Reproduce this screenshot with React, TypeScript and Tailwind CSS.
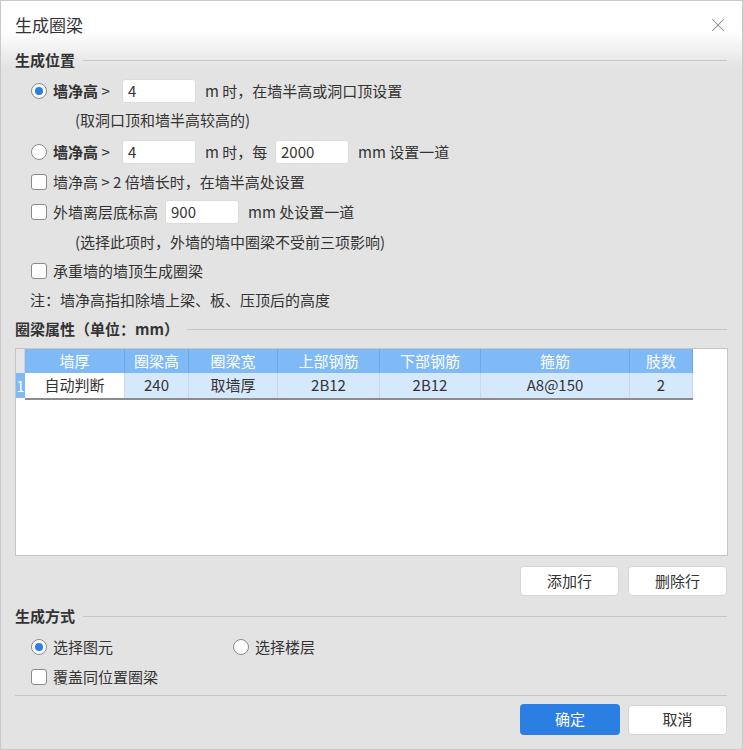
import { X } from "lucide-react";

const font = { fontFamily: '"Noto Sans CJK SC", "Microsoft YaHei", sans-serif' };

function Radio({ checked }: { checked?: boolean }) {
    return (
        <span className="w-4 h-4 rounded-full border border-[#8a8a8a] bg-white flex items-center justify-center shrink-0">
            {checked && <span className="w-2 h-2 rounded-full bg-[#2b7fe2]" />}
        </span>
    );
}

function Check() {
    return <span className="w-4 h-4 rounded-[3px] border border-[#8a8a8a] bg-white shrink-0" />;
}

function Field({ value, w = "w-[74px]" }: { value: string; w?: string }) {
    return (
        <span className={`${w} h-6 bg-white border border-[#dcdcdc] rounded-[3px] px-[5px] flex items-center text-[#333] text-[15px]`}>
            {value}
        </span>
    );
}

function Heading({ title }: { title: string }) {
    return (
        <div className="h-5 flex items-center gap-2 pr-[1px]">
            <span className="font-bold text-[15px] text-[#333]">{title}</span>
            <span className="flex-1 h-px bg-[#c6c6c6]" />
        </div>
    );
}

function Btn({ label, primary }: { label: string; primary?: boolean }) {
    return (
        <button
            className={
                primary
                    ? "w-[100px] h-[31px] rounded-[4px] bg-[#2b7fe2] text-white text-[15px]"
                    : "w-[99px] h-[30px] rounded-[4px] bg-white border border-[#d6d6d6] text-[#333] text-[15px]"
            }
        >
            {label}
        </button>
    );
}

const cols = [
    { h: "墙厚", v: "自动判断", w: "w-[100px]", white: true },
    { h: "圈梁高", v: "240", w: "w-[64px]" },
    { h: "圈梁宽", v: "取墙厚", w: "w-[89px]" },
    { h: "上部钢筋", v: "2B12", w: "w-[102px]" },
    { h: "下部钢筋", v: "2B12", w: "w-[101px]" },
    { h: "箍筋", v: "A8@150", w: "w-[149px]" },
    { h: "肢数", v: "2", w: "w-[63px]" },
];

export default function App() {
    return (
        <div
            style={font}
            className="w-[743px] h-[750px] border border-[#c9c9c9] bg-gradient-to-b from-white from-[4%] to-[#e3e3e3] to-[9%] text-[#333] text-[15px] flex flex-col"
        >
            {/* Title bar */}
            <div className="h-[49px] pl-[14px] pr-[13px] flex items-center justify-between">
                <span className="text-[17px] text-[#333] -mt-[2px]">生成圈梁</span>
                <X className="w-[22px] h-[22px] text-[#8a8a8a] -mt-[2px]" strokeWidth={1.1} />
            </div>

            <div className="pl-[14px] pr-[14px] flex flex-col">
                <Heading title="生成位置" />

                <div className="mt-[9px] h-6 pl-[16px] flex items-center">
                    <Radio checked />
                    <span className="ml-[6px] w-[69px]"><b>墙净高</b> &gt;</span>
                    <Field value="4" />
                    <span className="ml-[9px]">m 时，在墙半高或洞口顶设置</span>
                </div>
                <div className="mt-[7px] h-5 pl-[60px] flex items-center">(取洞口顶和墙半高较高的)</div>

                <div className="mt-[10px] h-6 pl-[16px] flex items-center">
                    <Radio />
                    <span className="ml-[6px] w-[69px]"><b>墙净高</b> &gt;</span>
                    <Field value="4" />
                    <span className="ml-[9px] w-[70px]">m 时，每</span>
                    <Field value="2000" />
                    <span className="ml-[9px]">mm 设置一道</span>
                </div>

                <div className="mt-[8px] h-5 pl-[16px] flex items-center">
                    <Check />
                    <span className="ml-[6px]">墙净高 &gt; 2 倍墙长时，在墙半高处设置</span>
                </div>

                <div className="mt-[8px] h-6 pl-[16px] flex items-center">
                    <Check />
                    <span className="ml-[6px] w-[112px]">外墙离层底标高</span>
                    <Field value="900" />
                    <span className="ml-[9px]">mm 处设置一道</span>
                </div>
                <div className="mt-[8px] h-5 pl-[60px] flex items-center">
                    (选择此项时，外墙的墙中圈梁不受前三项影响)
                </div>

                <div className="mt-[9px] h-5 pl-[16px] flex items-center">
                    <Check />
                    <span className="ml-[6px]">承重墙的墙顶生成圈梁</span>
                </div>
                <div className="mt-[9px] h-5 pl-[15px] flex items-center">注：墙净高指扣除墙上梁、板、压顶后的高度</div>

                <div className="mt-[9px]">
                    <Heading title="圈梁属性（单位：mm）" />
                </div>

                {/* Table */}
                <div className="mt-[9px] h-[208px] bg-white border border-[#c6c6c6] pr-[1px]">
                    <div className="flex h-6">
                        <span className="w-[9px] bg-[#e6e6e6] border-r border-[#d0d0d0]" />
                        {cols.map((c) => (
                            <span
                                key={c.h}
                                className={`${c.w} bg-[#7fb9f6] border-r border-[#6aa8ea] text-white text-[15px] flex items-center justify-center`}
                            >
                                {c.h}
                            </span>
                        ))}
                    </div>
                    <div className="flex h-[27px]">
                        <span className="w-[9px] h-[25px] bg-[#7fb9f6] text-white text-[15px] leading-none flex items-center justify-center">1</span>
                        <div className="flex h-[27px] border-b-2 border-r-2 border-[#8c8c8c]">
                            {cols.map((c, i) => (
                                <span
                                    key={c.h}
                                    className={`${c.w} ${c.white ? "bg-white" : "bg-[#d6e9fc]"} ${i === cols.length - 1 ? "-mr-[2px]" : ""} border-r border-[#c9d9ea] text-[#333] text-[15px] flex items-center justify-center`}
                                >
                                    {c.v}
                                </span>
                            ))}
                        </div>
                    </div>
                </div>

                <div className="mt-[10px] h-[30px] flex justify-end gap-[9px] pr-[1px]">
                    <Btn label="添加行" />
                    <Btn label="删除行" />
                </div>

                <div className="mt-[10px]">
                    <Heading title="生成方式" />
                </div>

                <div className="mt-[11px] h-5 pl-[16px] flex items-center">
                    <Radio checked />
                    <span className="ml-[6px] w-[180px]">选择图元</span>
                    <Radio />
                    <span className="ml-[6px]">选择楼层</span>
                </div>
                <div className="mt-[10px] h-5 pl-[16px] flex items-center">
                    <Check />
                    <span className="ml-[6px]">覆盖同位置圈梁</span>
                </div>

                <div className="mt-[8px] h-px bg-[#c6c6c6] mr-[1px]" />

                <div className="mt-[8px] h-[31px] flex justify-end items-center gap-[8px] pr-[1px]">
                    <Btn label="确定" primary />
                    <Btn label="取消" />
                </div>
            </div>
        </div>
    );
}
